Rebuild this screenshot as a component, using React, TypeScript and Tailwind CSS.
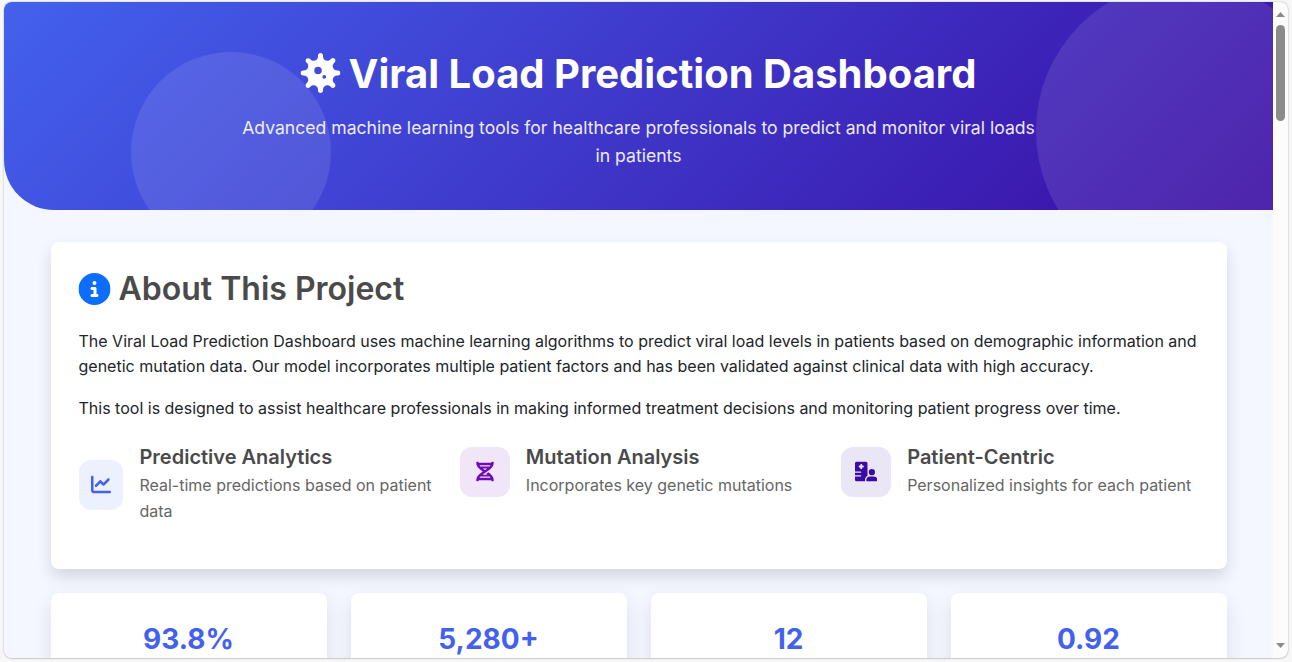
import type { ReactNode } from "react";
import { FaVirus, FaCircleInfo, FaChartLine, FaDna, FaHospitalUser } from "react-icons/fa6";

type FeatureProps = { icon: ReactNode; tone: string; title: string; text: string };

function Feature({ icon, tone, title, text }: FeatureProps) {
  return (
    <div className="flex items-center self-start">
      <div className={`mr-4 flex h-[50px] w-[50px] items-center justify-center rounded-xl text-[20px] ${tone}`}>
        {icon}
      </div>
      <div>
        <h3 className="mb-1 text-[20px] leading-6 font-semibold text-[#4a4a4a]">{title}</h3>
        <p className="leading-[25.6px] text-[#666666]">{text}</p>
      </div>
    </div>
  );
}

const features: FeatureProps[] = [
  {
    icon: <FaChartLine className="-translate-y-[0.5px]" />,
    tone: "bg-[#edf1ff] text-[#4361ee]",
    title: "Predictive Analytics",
    text: "Real-time predictions based on patient data",
  },
  {
    icon: <FaDna className="-translate-y-[0.5px]" />,
    tone: "shrink-0 bg-[#7209b7]/10 text-[#7209b7]",
    title: "Mutation Analysis",
    text: "Incorporates key genetic mutations",
  },
  {
    icon: <FaHospitalUser className="h-[20px] w-[22.5px] -translate-y-[0.5px]" />,
    tone: "shrink-0 bg-[#3a0ca3]/10 text-[#3a0ca3]",
    title: "Patient-Centric",
    text: "Personalized insights for each patient",
  },
];

const stats = ["93.8%", "5,280+", "12", "0.92"];

export default function App() {
  return (
    <div className="h-[662px] w-[1292px] overflow-hidden bg-[#f7f7f7] pt-[2px] pl-1 font-['Inter',sans-serif] text-[#212529]">
      <div className="flex h-[656px] w-[1284px] overflow-hidden rounded-lg bg-[#fcfcfc] shadow-[0_0_2px_rgba(0,0,0,0.3),0_1px_1px_rgba(0,0,0,0.1)]">
        <div className="w-[1269px] overflow-hidden bg-[#f4f7ff]">
          <header className="relative h-[208.3px] overflow-hidden rounded-bl-[50px] bg-[linear-gradient(135deg,#4361ee,#3a0ca3)] pt-12 text-center text-white">
            <div className="absolute top-[-10%] right-[-5%] h-[300px] w-[300px] rounded-full bg-white/10" />
            <div className="absolute bottom-[-20%] left-[10%] h-[200px] w-[200px] rounded-full bg-white/10" />
            <h1 className="relative flex h-12 items-center justify-center gap-2 text-[40px] leading-[48px] font-bold">
              <FaVirus className="-translate-x-[0.5px] -translate-y-px" />
              Viral Load Prediction Dashboard
            </h1>
            <p className="relative mx-auto mt-4 w-[800px] text-[17.6px] leading-[28.16px] font-normal opacity-90">
              Advanced machine learning tools for healthcare professionals to predict and monitor viral loads in patients
            </p>
          </header>

          <main className="mx-auto mt-8 w-[1176px]">
            <section className="h-[327px] rounded-lg bg-white p-7 shadow-[0_8px_16px_rgba(0,0,0,0.13)]">
              <h2 className="mb-5 flex items-center gap-2 text-[32px] leading-[38.4px] font-semibold text-[#4a4a4a]">
                <FaCircleInfo className="-translate-x-[0.5px] -translate-y-px text-[#0d6efd]" />
                About This Project
              </h2>
              <p className="mb-4 leading-[25.6px]">
                The Viral Load Prediction Dashboard uses machine learning algorithms to predict viral load levels in
                patients based on demographic information and genetic mutation data. Our model incorporates multiple
                patient factors and has been validated against clinical data with high accuracy.
              </p>
              <p className="mb-6 leading-[25.6px]">
                This tool is designed to assist healthcare professionals in making informed treatment decisions and
                monitoring patient progress over time.
              </p>
              <div className="grid grid-cols-3 gap-6">
                {features.map((f) => (
                  <Feature key={f.title} {...f} />
                ))}
              </div>
            </section>

            <section className="mt-6 grid grid-cols-4 gap-6">
              {stats.map((value) => (
                <div
                  key={value}
                  className="h-[140px] rounded-lg bg-white pt-7 text-center text-[28px] leading-[36px] font-bold text-[#4361ee] shadow-[0_8px_20px_rgba(0,0,0,0.1)]"
                >
                  {value}
                </div>
              ))}
            </section>
          </main>
        </div>

        <div className="flex w-[15px] flex-col items-center justify-between py-[10px]">
          <div className="flex flex-col items-center gap-2">
            <svg className="h-[5px] w-[9px]" viewBox="0 0 9 5">
              <path d="M0 5 4.5 0 9 5Z" fill="#8b8b8b" />
            </svg>
            <div className="h-24 w-[9px] rounded-full bg-[#8b8b8b]" />
          </div>
          <svg className="h-[5px] w-[9px]" viewBox="0 0 9 5">
            <path d="M0 0h9L4.5 5Z" fill="#8b8b8b" />
          </svg>
        </div>
      </div>
    </div>
  );
}
